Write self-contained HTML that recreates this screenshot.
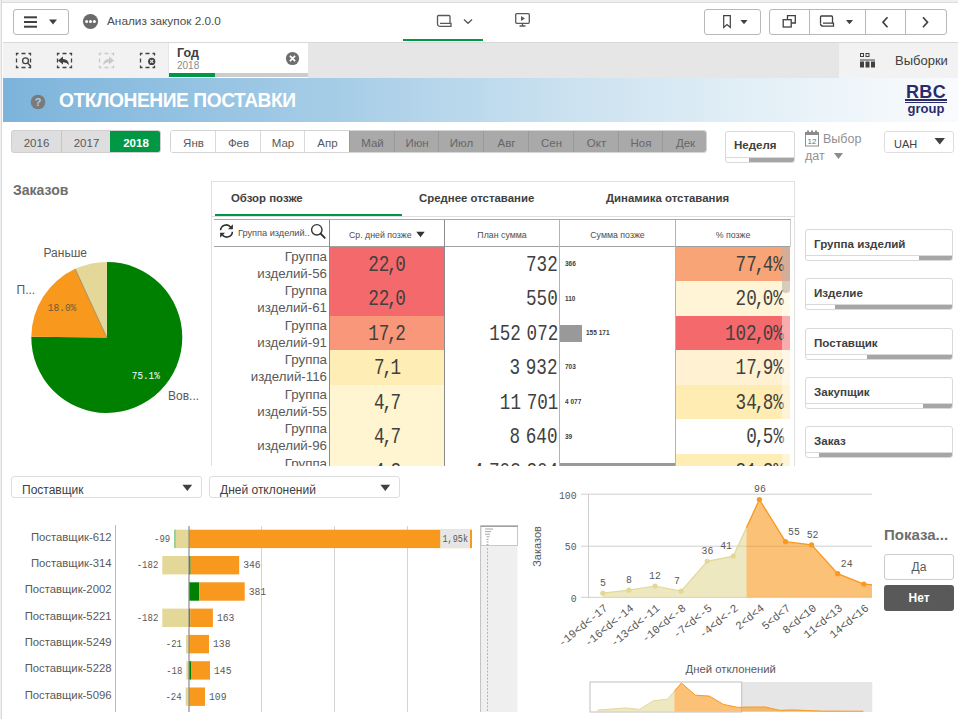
<!DOCTYPE html>
<html lang="ru">
<head>
<meta charset="utf-8">
<title>Анализ закупок 2.0.0</title>
<style>
*{box-sizing:border-box;margin:0;padding:0}
html,body{width:958px;height:719px;overflow:hidden;background:#fff}
body{position:relative;font-family:"Liberation Sans",sans-serif;color:#595959;font-size:12px}
.abs{position:absolute}
.t{position:absolute;white-space:nowrap;line-height:1}
.mono{font-family:"Liberation Mono",monospace}
/* frame */
#frameTop{left:0;top:0;width:958px;height:3px;background:#efefef;border-bottom:1px solid #dcdcdc}
#frameLeft{left:0;top:0;width:2px;height:719px;background:#efefef;border-right:1px solid #d9d9d9}
/* toolbar */
.btn{position:absolute;border:1px solid #b8b8b8;border-radius:3px;background:#fff}
.vdiv{position:absolute;top:0;width:1px;height:100%;background:#b8b8b8}
#tbLine{left:3px;top:42px;width:955px;height:1px;background:#d9d9d9}
/* selection bar */
#selbar{left:3px;top:43px;width:955px;height:35px;background:#e6e6e6}
#selLeft{left:0;top:0;width:165px;height:35px;background:#f2f2f2}
#selTab{left:166px;top:0;width:139px;height:35px;background:#fff}
#selRight{left:836px;top:0;width:119px;height:35px;background:#f2f2f2}
.yr{top:0;height:21px;line-height:24px;text-align:center}
.c1{left:2px;width:113px;text-align:right;font-size:13.300px;line-height:17.250px;color:#595959;white-space:nowrap;padding-top:1px}
.num{font-family:"Liberation Mono",monospace;font-size:21.500px;color:#404040;white-space:nowrap;overflow:hidden}
.sq{display:inline-block;transform:scaleX(0.82);word-spacing:-6px}
.cm{margin:0 -2.800px}
.tiny{font-size:6.500px;font-weight:bold;color:#404040;font-family:"Liberation Sans",sans-serif}
.lb{left:805px;width:148px;height:32px;border:1px solid #d9d9d9;border-radius:3px;background:#fff;overflow:hidden}
.dd{height:22px;border:1px solid #dedede;border-radius:3px;background:#fff}
/* banner */
#banner{left:3px;top:78px;width:955px;height:44px;background:linear-gradient(90deg,#7db4db 0%,#a6cde7 35%,#cce2f0 60%,#e4f0f7 80%,#f5f9fc 95%,#f9fbfd 100%)}
</style>
</head>
<body>
<div id="frameTop" class="abs"></div>

<!-- TOOLBAR -->
<div id="toolbar" class="abs" style="left:3px;top:3px;width:955px;height:39px;background:#fff">
  <!-- menu button -->
  <div class="btn" style="left:10px;top:6px;width:56px;height:26px">
    <svg class="abs" style="left:0;top:0" width="54" height="24" viewBox="0 0 54 24">
      <rect x="10" y="6.300" width="13" height="2" fill="#404040"/>
      <rect x="10" y="11" width="13" height="2" fill="#404040"/>
      <rect x="10" y="15.700" width="13" height="2" fill="#404040"/>
      <path d="M35 9.5 L43 9.5 L39 14.5 Z" fill="#404040"/>
    </svg>
  </div>
  <!-- app icon -->
  <svg class="abs" style="left:79px;top:10px" width="17" height="17" viewBox="0 0 17 17">
    <circle cx="8.5" cy="8.5" r="7.6" fill="#6a6a6a"/>
    <circle cx="4.6" cy="8.6" r="1.5" fill="#fff"/><circle cx="8.5" cy="8.6" r="1.5" fill="#fff"/><circle cx="12.4" cy="8.6" r="1.5" fill="#fff"/>
  </svg>
  <div class="t" style="left:104px;top:13px;font-size:11.800px;color:#4d4d4d">Анализ закупок 2.0.0</div>
  <!-- center sheet icon -->
  <svg class="abs" style="left:431px;top:11px" width="20" height="16" viewBox="0 0 20 16">
    <path d="M3.5 9.5 V2.5 Q3.5 1.5 4.5 1.5 H15 Q16 1.5 16 2.5 V9 M6 9.3 H17 V12.3 H6.3 Q3.5 12.3 3.5 9.5" fill="none" stroke="#595959" stroke-width="1.3"/>
  </svg>
  <svg class="abs" style="left:459px;top:14px" width="12" height="9" viewBox="0 0 12 9"><path d="M2 2.5 L6 6.3 L10 2.5" fill="none" stroke="#595959" stroke-width="1.4"/></svg>
  <div class="abs" style="left:400px;top:36px;width:80px;height:2px;background:#009845"></div>
  <!-- presentation icon -->
  <svg class="abs" style="left:511px;top:9px" width="18" height="16" viewBox="0 0 18 16">
    <rect x="1.7" y="1.7" width="13.6" height="9.6" rx="1" fill="none" stroke="#595959" stroke-width="1.3"/>
    <path d="M7 4 L11 6.5 L7 9 Z" fill="#595959"/>
    <path d="M8.5 11.5 V13.5 M5.5 14 H11.5" stroke="#595959" stroke-width="1.3" fill="none"/>
  </svg>
  <!-- bookmark button -->
  <div class="btn" style="left:701px;top:6px;width:57px;height:26px">
    <svg class="abs" style="left:0;top:0" width="55" height="24" viewBox="0 0 55 24">
      <path d="M18.7 5.7 H25.3 V17.5 L22 14.6 L18.7 17.5 Z" fill="none" stroke="#404040" stroke-width="1.2"/>
      <path d="M35.5 10 L42.5 10 L39 14.3 Z" fill="#404040"/>
    </svg>
  </div>
  <!-- right group -->
  <div class="btn" style="left:766px;top:6px;width:178px;height:26px">
    <div class="vdiv" style="left:39px"></div>
    <div class="vdiv" style="left:95px"></div>
    <div class="vdiv" style="left:135px"></div>
    <svg class="abs" style="left:-1px;top:0" width="177" height="24" viewBox="0 0 177 24">
      <!-- duplicate -->
      <path d="M18.5 9.5 V5.7 H26.3 V13 H22.5" fill="none" stroke="#404040" stroke-width="1.3"/>
      <rect x="14.2" y="9.7" width="8" height="7.3" fill="none" stroke="#404040" stroke-width="1.3"/>
      <!-- sheet -->
      <path d="M51.5 13.2 V7 Q51.5 6 52.5 6 H62.5 Q63.5 6 63.5 7 V13 M54 13.2 H64.5 V16.2 H54.3 Q51.5 16.2 51.5 13.4" fill="none" stroke="#404040" stroke-width="1.3"/>
      <path d="M77 10 L84 10 L80.5 14.3 Z" fill="#404040"/>
      <!-- prev / next -->
      <path d="M118.500 7.300 L114 12.200 L118.500 17.200" fill="none" stroke="#404040" stroke-width="1.700"/>
      <path d="M154 7.300 L158.500 12.200 L154 17.200" fill="none" stroke="#404040" stroke-width="1.700"/>
    </svg>
  </div>
</div>
<div id="tbLine" class="abs"></div>

<!-- SELECTION BAR -->
<div id="selbar" class="abs">
  <div id="selLeft" class="abs">
    <svg class="abs" style="left:0;top:0" width="165" height="35" viewBox="0 0 165 35">
      <g fill="none" stroke="#404040" stroke-width="1.3">
        <rect x="13.500" y="10.500" width="14" height="14" stroke-dasharray="4 3" stroke-dashoffset="2"/>
        <circle cx="22.500" cy="17.800" r="2.900" fill="#f2f2f2"/>
        <path d="M24.600 20 L27.800 23.300"/>
        <rect x="54.500" y="10.500" width="14" height="14" stroke-dasharray="4 3" stroke-dashoffset="2"/>
        <rect x="137.500" y="10.500" width="14" height="14" stroke-dasharray="4 3" stroke-dashoffset="2"/>
      </g>
      <rect x="56.500" y="14" width="9" height="8" fill="#f2f2f2"/>
      <path d="M55 17.500 L60 13.500 V16 Q65.500 16 66 22 Q63.500 19 60 19.200 V21.500 Z" fill="#404040"/>
      <g opacity="0.22">
        <rect x="96.500" y="10.500" width="14" height="14" fill="none" stroke="#404040" stroke-width="1.3" stroke-dasharray="4 3" stroke-dashoffset="2"/>
        <rect x="99.500" y="14" width="12" height="8" fill="#f2f2f2"/>
        <path d="M111 17.500 L106 13.500 V16 Q100.500 16 100 22 Q102.500 19 106 19.200 V21.500 Z" fill="#404040"/>
      </g>
      <circle cx="148.700" cy="18.400" r="4.600" fill="#f2f2f2"/>
      <circle cx="148.700" cy="18.400" r="3.600" fill="#404040"/>
      <path d="M147.200 16.900 L150.200 19.900 M150.200 16.900 L147.200 19.900" stroke="#f2f2f2" stroke-width="1.100"/>
    </svg>
  </div>
  <div id="selTab" class="abs">
    <div class="t" style="left:8px;top:4px;font-size:12.500px;font-weight:bold;color:#404040">Год</div>
    <div class="t" style="left:8px;top:18px;font-size:10px;color:#8c8c8c">2018</div>
    <svg class="abs" style="left:116px;top:8px" width="15" height="15" viewBox="0 0 15 15">
      <circle cx="7.500" cy="7.500" r="6.600" fill="#6e6e6e"/>
      <path d="M4.900 4.900 L10.100 10.100 M10.100 4.900 L4.900 10.100" stroke="#fff" stroke-width="1.700"/>
    </svg>
    <div class="abs" style="left:0;top:30px;width:139px;height:4px;background:#ccc"></div>
    <div class="abs" style="left:0;top:30px;width:46px;height:4px;background:#009845"></div>
  </div>
  <div id="selRight" class="abs">
    <svg class="abs" style="left:20px;top:9px" width="17" height="17" viewBox="0 0 17 17">
      <g fill="none" stroke="#404040" stroke-width="1"><rect x="1.500" y="1.500" width="3" height="3"/><rect x="7" y="1.500" width="3" height="3"/></g>
      <rect x="1" y="7.500" width="15" height="1" fill="#404040"/><g fill="#404040"><rect x="1" y="9.500" width="4" height="6"/><rect x="6.500" y="9.500" width="4" height="6"/><rect x="12" y="9.500" width="4" height="6"/></g>
    </svg>
    <div class="t" style="left:56px;top:11px;font-size:13px;color:#404040">Выборки</div>
  </div>
</div>

<!-- BANNER -->
<div id="banner" class="abs">
  <svg class="abs" style="left:27px;top:16px" width="16" height="16" viewBox="0 0 16 16">
    <circle cx="8" cy="8" r="7.300" fill="#7a7a7a"/>
    <text x="8" y="12" text-anchor="middle" font-family="Liberation Sans, sans-serif" font-weight="bold" font-size="11" fill="#a9cfea">?</text>
  </svg>
  <div class="t" id="title" style="left:56px;top:11px;font-size:21px;font-weight:bold;color:#fff;letter-spacing:-0.5px;transform-origin:0 0;transform:scaleX(0.915)">ОТКЛОНЕНИЕ ПОСТАВКИ</div>
  <div class="abs" style="left:902px;top:5px;width:42px;height:34px;color:#2b2b6b;font-weight:bold;text-align:center">
    <div class="t" style="left:0;top:0;width:42px;font-size:18px;letter-spacing:0.3px">RBC</div>
    <div class="abs" style="left:0;top:16px;width:42px;height:1.500px;background:#2b2b6b"></div>
    <div class="abs" style="left:0;top:19px;width:42px;height:1px;background:#2b2b6b"></div>
    <div class="t" style="left:0;top:19px;width:42px;font-size:13px">group</div>
  </div>
</div>

<!-- FILTERS -->
<div id="filters">
<div class="abs" style="left:11px;top:130px;width:150px;height:23px;border-radius:3px;overflow:hidden;border:1px solid #cfcfcf;background:#dedede;font-size:11.500px">
<div class="abs yr" style="left:0;width:49px">2016</div><div class="abs yr" style="left:49px;width:50px;border-left:1px solid #c6c6c6">2017</div><div class="abs yr" style="left:98px;top:-1px;height:23px;width:52px;background:#009845;color:#fff;font-weight:bold;line-height:26px">2018</div></div>
<div class="abs" style="left:170px;top:130px;width:537px;height:23px;border-radius:3px;overflow:hidden;border:1px solid #d4d4d4;background:#fff;font-size:11.500px">
<div class="abs yr" style="left:0px;width:45px;background:#fff;color:#595959;">Янв</div>
<div class="abs yr" style="left:44px;width:46px;background:#fff;color:#595959;border-left:1px solid #d9d9d9;">Фев</div>
<div class="abs yr" style="left:89px;width:45px;background:#fff;color:#595959;border-left:1px solid #d9d9d9;">Мар</div>
<div class="abs yr" style="left:133px;width:46px;background:#fff;color:#595959;border-left:1px solid #d9d9d9;">Апр</div>
<div class="abs yr" style="left:178px;width:46px;background:#a9a9a9;color:#666;border-left:1px solid #999;">Май</div>
<div class="abs yr" style="left:223px;width:45px;background:#a9a9a9;color:#666;border-left:1px solid #999;">Июн</div>
<div class="abs yr" style="left:267px;width:46px;background:#a9a9a9;color:#666;border-left:1px solid #999;">Июл</div>
<div class="abs yr" style="left:312px;width:46px;background:#a9a9a9;color:#666;border-left:1px solid #999;">Авг</div>
<div class="abs yr" style="left:357px;width:46px;background:#a9a9a9;color:#666;border-left:1px solid #999;">Сен</div>
<div class="abs yr" style="left:402px;width:46px;background:#a9a9a9;color:#666;border-left:1px solid #999;">Окт</div>
<div class="abs yr" style="left:447px;width:45px;background:#a9a9a9;color:#666;border-left:1px solid #999;">Ноя</div>
<div class="abs yr" style="left:491px;width:46px;background:#a9a9a9;color:#666;border-left:1px solid #999;">Дек</div>
</div>
<div class="abs" style="left:725px;top:131px;width:70px;height:32px;border:1px solid #d9d9d9;border-radius:3px;background:#fff;overflow:hidden">
  <div class="t" style="left:8px;top:8px;font-size:11.500px;font-weight:bold;color:#404040">Неделя</div>
  <div class="abs" style="left:0;top:25px;width:68px;height:1px;background:#d9d9d9"></div>
  <div class="abs" style="left:23px;top:26px;width:46px;height:4px;background:#a6a6a6"></div>
</div>
<svg class="abs" style="left:804px;top:130px" width="17" height="18" viewBox="0 0 17 18">
  <rect x="1.500" y="3.500" width="13" height="12.500" fill="#fff" stroke="#8c8c8c" stroke-width="1"/>
  <rect x="1" y="2" width="14" height="3" fill="#8c8c8c"/>
  <rect x="3" y="0.500" width="2" height="3" fill="#8c8c8c"/><rect x="7" y="0.500" width="2" height="3" fill="#8c8c8c"/><rect x="11" y="0.500" width="2" height="3" fill="#8c8c8c"/>
  <text x="8" y="13.500" text-anchor="middle" font-family="Liberation Sans, sans-serif" font-size="8" fill="#6e6e6e">12</text>
</svg>
<div class="t" style="left:823px;top:133px;font-size:12.500px;color:#919191">Выбор</div>
<div class="t" style="left:805px;top:150px;font-size:12.500px;color:#919191">дат</div>
<svg class="abs" style="left:833px;top:152px" width="11" height="8" viewBox="0 0 11 8"><path d="M1 1 H10 L5.500 7 Z" fill="#8c8c8c"/></svg>
<div class="abs" style="left:884px;top:131px;width:70px;height:22px;border:1px solid #dedede;border-radius:3px;background:#fff">
  <div class="t" style="left:9px;top:7px;font-size:11px;color:#404040">UAH</div>
  <svg class="abs" style="left:49px;top:5px" width="12" height="9" viewBox="0 0 12 9"><path d="M0.500 1 H11 L5.750 7.500 Z" fill="#404040"/></svg>
</div>
</div>

<!-- PIE -->
<div id="pie">
<div class="t" style="left:13px;top:183px;font-size:14px;font-weight:bold;color:#6e6e6e">Заказов</div>
<svg class="abs" style="left:0;top:230px" width="211" height="200" viewBox="0 230 211 200">
<path d="M106.80 337.40 L106.80 261.90 A75.50 75.50 0 1 1 31.30 336.87 Z" fill="#008000"/>
<path d="M106.80 337.40 L31.30 336.87 A75.50 75.50 0 0 1 75.13 268.86 Z" fill="#f8981d"/>
<path d="M106.80 337.40 L75.13 268.86 A75.50 75.50 0 0 1 106.80 261.90 Z" fill="#e3d898"/>
<path d="M106.80 337.40 L75.13 268.86" stroke="#8a7a55" stroke-width="0.7"/>
<text x="43.500" y="257" font-size="12" fill="#595959" font-family="Liberation Sans, sans-serif">Раньше</text>
<text x="16.500" y="294" font-size="12" fill="#595959" font-family="Liberation Sans, sans-serif">П...</text>
<text x="168" y="400" font-size="12" fill="#595959" font-family="Liberation Sans, sans-serif">Вов...</text>
<text x="47.800" y="310.700" font-size="10.500" textLength="28.500" lengthAdjust="spacingAndGlyphs" fill="#6b5a3a" font-family="Liberation Mono, monospace">18.0%</text>
<text x="131.800" y="378.800" font-size="10.500" textLength="28" lengthAdjust="spacingAndGlyphs" fill="#fff" font-family="Liberation Mono, monospace">75.1%</text>
</svg>
</div>

<!-- TABLE -->
<div id="table">
<div class="abs" style="left:211px;top:181px;width:584px;height:285px;border:1px solid #e0e0e0;border-bottom:none;background:#fff;overflow:hidden">
<div class="t" style="left:19px;top:11px;font-size:11.400px;font-weight:bold;color:#404040">Обзор позже</div>
<div class="t" style="left:207px;top:11px;font-size:11.400px;font-weight:bold;color:#404040">Среднее отставание</div>
<div class="t" style="left:394px;top:11px;font-size:11.400px;font-weight:bold;color:#404040">Динамика отставания</div>
<div class="abs" style="left:3px;top:32px;width:187px;height:2px;background:#009845"></div>
<div class="abs" style="left:0;top:34px;width:584px;height:1px;background:#e0e0e0"></div>
<div class="abs" style="left:2px;top:37px;width:577px;height:1px;background:#a8a8a8"></div>
<div class="abs" style="left:2px;top:64px;width:577px;height:1px;background:#a0a0a0"></div>
<div class="abs c1" style="top:65px;height:34px">Группа<br>изделий-56</div>
<div class="abs num" style="left:118px;top:65px;width:115px;height:34px;background:#f4696b;text-align:center;line-height:36px"><span class="sq" style="transform-origin:50% 50%">22<span class="cm">,</span>0</span></div>
<div class="abs num" style="left:233px;top:65px;width:114px;height:34px;text-align:right;line-height:36px;padding-right:1px"><span class="sq" style="transform-origin:100% 50%">732</span></div>
<div class="abs num" style="left:464px;top:65px;width:114px;height:34px;background:#f8a477;text-align:right;line-height:36px;padding-right:6px"><span class="sq" style="transform-origin:100% 50%">77<span class="cm">,</span>4%</span></div>
<div class="t tiny" style="left:353px;top:79px">366</div>
<div class="abs c1" style="top:99px;height:35px">Группа<br>изделий-61</div>
<div class="abs num" style="left:118px;top:99px;width:115px;height:35px;background:#f4696b;text-align:center;line-height:37px"><span class="sq" style="transform-origin:50% 50%">22<span class="cm">,</span>0</span></div>
<div class="abs num" style="left:233px;top:99px;width:114px;height:35px;text-align:right;line-height:37px;padding-right:1px"><span class="sq" style="transform-origin:100% 50%">550</span></div>
<div class="abs num" style="left:464px;top:99px;width:114px;height:35px;background:#fff5d6;text-align:right;line-height:37px;padding-right:6px"><span class="sq" style="transform-origin:100% 50%">20<span class="cm">,</span>0%</span></div>
<div class="t tiny" style="left:353px;top:114px">110</div>
<div class="abs c1" style="top:134px;height:34px">Группа<br>изделий-91</div>
<div class="abs num" style="left:118px;top:134px;width:115px;height:34px;background:#f8977a;text-align:center;line-height:36px"><span class="sq" style="transform-origin:50% 50%">17<span class="cm">,</span>2</span></div>
<div class="abs num" style="left:233px;top:134px;width:114px;height:34px;text-align:right;line-height:36px;padding-right:1px"><span class="sq" style="transform-origin:100% 50%">152 072</span></div>
<div class="abs num" style="left:464px;top:134px;width:114px;height:34px;background:#f4696b;text-align:right;line-height:36px;padding-right:6px"><span class="sq" style="transform-origin:100% 50%">102<span class="cm">,</span>0%</span></div>
<div class="abs" style="left:348px;top:143px;width:22px;height:17px;background:#999"></div>
<div class="t tiny" style="left:374px;top:148px">155 171</div>
<div class="abs c1" style="top:168px;height:35px">Группа<br>изделий-116</div>
<div class="abs num" style="left:118px;top:168px;width:115px;height:35px;background:#feedb5;text-align:center;line-height:37px"><span class="sq" style="transform-origin:50% 50%">7<span class="cm">,</span>1</span></div>
<div class="abs num" style="left:233px;top:168px;width:114px;height:35px;text-align:right;line-height:37px;padding-right:1px"><span class="sq" style="transform-origin:100% 50%">3 932</span></div>
<div class="abs num" style="left:464px;top:168px;width:114px;height:35px;background:#fff1d2;text-align:right;line-height:37px;padding-right:6px"><span class="sq" style="transform-origin:100% 50%">17<span class="cm">,</span>9%</span></div>
<div class="t tiny" style="left:353px;top:182px">703</div>
<div class="abs c1" style="top:203px;height:34px">Группа<br>изделий-55</div>
<div class="abs num" style="left:118px;top:203px;width:115px;height:34px;background:#fff5d0;text-align:center;line-height:36px"><span class="sq" style="transform-origin:50% 50%">4<span class="cm">,</span>7</span></div>
<div class="abs num" style="left:233px;top:203px;width:114px;height:34px;text-align:right;line-height:36px;padding-right:1px"><span class="sq" style="transform-origin:100% 50%">11 701</span></div>
<div class="abs num" style="left:464px;top:203px;width:114px;height:34px;background:#feecb2;text-align:right;line-height:36px;padding-right:6px"><span class="sq" style="transform-origin:100% 50%">34<span class="cm">,</span>8%</span></div>
<div class="t tiny" style="left:353px;top:217px">4 077</div>
<div class="abs c1" style="top:237px;height:35px">Группа<br>изделий-96</div>
<div class="abs num" style="left:118px;top:237px;width:115px;height:35px;background:#fff5d0;text-align:center;line-height:37px"><span class="sq" style="transform-origin:50% 50%">4<span class="cm">,</span>7</span></div>
<div class="abs num" style="left:233px;top:237px;width:114px;height:35px;text-align:right;line-height:37px;padding-right:1px"><span class="sq" style="transform-origin:100% 50%">8 640</span></div>
<div class="abs num" style="left:464px;top:237px;width:114px;height:35px;background:#ffffff;text-align:right;line-height:37px;padding-right:6px"><span class="sq" style="transform-origin:100% 50%">0<span class="cm">,</span>5%</span></div>
<div class="t tiny" style="left:353px;top:252px">39</div>
<div class="abs c1" style="top:272px;height:34px">Группа<br>изделий-12</div>
<div class="abs num" style="left:118px;top:272px;width:115px;height:34px;background:#fff5d0;text-align:center;line-height:36px"><span class="sq" style="transform-origin:50% 50%">4<span class="cm">,</span>2</span></div>
<div class="abs num" style="left:233px;top:272px;width:114px;height:34px;text-align:right;line-height:36px;padding-right:1px"><span class="sq" style="transform-origin:100% 50%">4 708 204</span></div>
<div class="abs num" style="left:464px;top:272px;width:114px;height:34px;background:#feedb5;text-align:right;line-height:36px;padding-right:6px"><span class="sq" style="transform-origin:100% 50%">31<span class="cm">,</span>2%</span></div>
<div class="abs" style="left:348px;top:281px;width:115px;height:17px;background:#999"></div>
<div class="abs" style="left:117px;top:38px;width:1px;height:247px;background:#8c8c8c"></div>
<div class="abs" style="left:232px;top:38px;width:1px;height:247px;background:#8c8c8c"></div>
<div class="abs" style="left:347px;top:38px;width:1px;height:247px;background:#b4b4b4"></div>
<div class="abs" style="left:463px;top:38px;width:1px;height:247px;background:#b4b4b4"></div>
<div class="abs" style="left:578px;top:38px;width:1px;height:27px;background:#d0d0d0"></div>
<svg class="abs" style="left:6px;top:41px" width="17" height="16" viewBox="0 0 17 16">
  <path d="M2.600 7.300 A5.600 5.600 0 0 1 12.700 4.200" fill="none" stroke="#333" stroke-width="1.600"/>
  <path d="M14.400 8.700 A5.600 5.600 0 0 1 4.300 11.800" fill="none" stroke="#333" stroke-width="1.600"/>
  <path d="M14.900 1.300 V6.200 H10 Z" fill="#333"/>
  <path d="M2.100 14.700 V9.800 H7 Z" fill="#333"/>
</svg>
<div class="t" style="left:26px;top:47px;font-size:9.200px;color:#4d4d4d">Группа изделий..</div>
<svg class="abs" style="left:98px;top:41px" width="17" height="17" viewBox="0 0 17 17">
  <circle cx="6.800" cy="6.800" r="5.200" fill="#fff" stroke="#333" stroke-width="1.400"/><path d="M10.500 10.500 L15.300 15.300" stroke="#333" stroke-width="1.800"/>
</svg>
<div class="t" style="left:118px;top:49px;width:114px;text-align:center;font-size:8.800px;color:#4d4d4d">Ср. дней позже <svg width="9" height="7" viewBox="0 0 9 7" style="margin-left:2px"><path d="M0.300 0.800 H8.700 L4.500 6.300 Z" fill="#333"/></svg></div>
<div class="t" style="left:233px;top:49px;width:114px;text-align:center;font-size:8.800px;color:#4d4d4d">План сумма</div>
<div class="t" style="left:348px;top:49px;width:115px;text-align:center;font-size:8.800px;color:#4d4d4d">Сумма позже</div>
<div class="t" style="left:464px;top:49px;width:114px;text-align:center;font-size:8.800px;color:#4d4d4d">% позже</div>
<div class="abs" style="left:570px;top:65px;width:8px;height:220px;background:rgba(255,255,255,0.45)"></div>
<div class="abs" style="left:570px;top:65px;width:8px;height:46px;background:rgba(120,100,90,0.30);border-radius:0 0 4px 4px"></div>
</div>
</div>

<!-- SIDEBAR -->
<div id="side">
<div class="abs lb" style="top:229px"><div class="t" style="left:8px;top:8px;font-size:11.600px;font-weight:bold;color:#404040">Группа изделий</div><div class="abs" style="left:0;top:25px;width:146px;height:1px;background:#d9d9d9"></div><div class="abs" style="left:113px;top:26px;width:33px;height:4px;background:#a6a6a6"></div></div>
<div class="abs lb" style="top:278px"><div class="t" style="left:8px;top:8px;font-size:11.600px;font-weight:bold;color:#404040">Изделие</div><div class="abs" style="left:0;top:25px;width:146px;height:1px;background:#d9d9d9"></div><div class="abs" style="left:29px;top:26px;width:117px;height:4px;background:#a6a6a6"></div></div>
<div class="abs lb" style="top:328px"><div class="t" style="left:8px;top:8px;font-size:11.600px;font-weight:bold;color:#404040">Поставщик</div><div class="abs" style="left:0;top:25px;width:146px;height:1px;background:#d9d9d9"></div><div class="abs" style="left:61px;top:26px;width:85px;height:4px;background:#a6a6a6"></div></div>
<div class="abs lb" style="top:377px"><div class="t" style="left:8px;top:8px;font-size:11.600px;font-weight:bold;color:#404040">Закупщик</div><div class="abs" style="left:0;top:25px;width:146px;height:1px;background:#d9d9d9"></div><div class="abs" style="left:117px;top:26px;width:29px;height:4px;background:#a6a6a6"></div></div>
<div class="abs lb" style="top:426px"><div class="t" style="left:8px;top:8px;font-size:11.600px;font-weight:bold;color:#404040">Заказ</div><div class="abs" style="left:0;top:25px;width:146px;height:1px;background:#d9d9d9"></div><div class="abs" style="left:13px;top:26px;width:133px;height:4px;background:#a6a6a6"></div></div>
</div>

<!-- BARCHART -->
<div id="bars">
<div class="abs dd" style="left:11px;top:476px;width:191px"><div class="t" style="left:10px;top:7px;font-size:12px;color:#404040">Поставщик</div><svg class="abs" style="left:170px;top:7px" width="11" height="8" viewBox="0 0 11 8"><path d="M0.400 0.800 H10.200 L5.300 7 Z" fill="#404040"/></svg></div>
<div class="abs dd" style="left:209px;top:476px;width:191px"><div class="t" style="left:10px;top:7px;font-size:12px;color:#404040">Дней отклонений</div><svg class="abs" style="left:170px;top:7px" width="11" height="8" viewBox="0 0 11 8"><path d="M0.400 0.800 H10.200 L5.300 7 Z" fill="#404040"/></svg></div>
<svg class="abs" style="left:0;top:520px" width="530" height="199" viewBox="0 520 530 199" font-family="Liberation Sans, sans-serif">
<rect x="261" y="526" width="1" height="186" fill="#d4d4d4"/>
<rect x="334" y="526" width="1" height="186" fill="#d4d4d4"/>
<rect x="407" y="526" width="1" height="186" fill="#d4d4d4"/>
<rect x="115" y="525" width="1" height="187" fill="#bdbdbd"/>
<rect x="174.2" y="529.7" width="1.6" height="18.4" fill="#7cc47c"/>
<rect x="175.8" y="529.7" width="13.2" height="18.4" fill="#e3d898"/>
<rect x="189.0" y="529.7" width="281.0" height="18.4" fill="#f8981d"/>
<text x="111.500" y="540.7" text-anchor="end" font-size="11.300" fill="#595959">Поставщик-612</text>
<text x="170.2" y="542.0" text-anchor="end" font-size="10.500" fill="#595959" font-family="Liberation Mono, monospace" textLength="16.2" lengthAdjust="spacingAndGlyphs">-99</text>
<rect x="162.3" y="556.0" width="26.7" height="18.4" fill="#e3d898"/>
<rect x="189.0" y="556.0" width="1.6" height="18.4" fill="#008000"/>
<rect x="190.6" y="556.0" width="48.6" height="18.4" fill="#f8981d"/>
<text x="111.500" y="567.0" text-anchor="end" font-size="11.300" fill="#595959">Поставщик-314</text>
<text x="158.3" y="568.3" text-anchor="end" font-size="10.500" fill="#595959" font-family="Liberation Mono, monospace" textLength="21.6" lengthAdjust="spacingAndGlyphs">-182</text>
<text x="243.2" y="568.3" font-size="10.500" fill="#595959" font-family="Liberation Mono, monospace" textLength="17.500" lengthAdjust="spacingAndGlyphs">346</text>
<rect x="189.0" y="582.3" width="10.1" height="18.4" fill="#008000"/>
<rect x="199.1" y="582.3" width="45.6" height="18.4" fill="#f8981d"/>
<text x="111.500" y="593.3" text-anchor="end" font-size="11.300" fill="#595959">Поставщик-2002</text>
<text x="248.7" y="594.6" font-size="10.500" fill="#595959" font-family="Liberation Mono, monospace" textLength="17.500" lengthAdjust="spacingAndGlyphs">381</text>
<rect x="162.3" y="608.6" width="26.7" height="18.4" fill="#e3d898"/>
<rect x="189.0" y="608.6" width="1.3" height="18.4" fill="#008000"/>
<rect x="190.3" y="608.6" width="22.6" height="18.4" fill="#f8981d"/>
<text x="111.500" y="619.6" text-anchor="end" font-size="11.300" fill="#595959">Поставщик-5221</text>
<text x="158.3" y="620.9" text-anchor="end" font-size="10.500" fill="#595959" font-family="Liberation Mono, monospace" textLength="21.6" lengthAdjust="spacingAndGlyphs">-182</text>
<text x="216.9" y="620.9" font-size="10.500" fill="#595959" font-family="Liberation Mono, monospace" textLength="17.500" lengthAdjust="spacingAndGlyphs">163</text>
<rect x="186.0" y="634.9" width="3.0" height="18.4" fill="#e3d898"/>
<rect x="189.0" y="634.9" width="20.0" height="18.4" fill="#f8981d"/>
<text x="111.500" y="645.9" text-anchor="end" font-size="11.300" fill="#595959">Поставщик-5249</text>
<text x="182.0" y="647.2" text-anchor="end" font-size="10.500" fill="#595959" font-family="Liberation Mono, monospace" textLength="16.2" lengthAdjust="spacingAndGlyphs">-21</text>
<text x="213.0" y="647.2" font-size="10.500" fill="#595959" font-family="Liberation Mono, monospace" textLength="17.500" lengthAdjust="spacingAndGlyphs">138</text>
<rect x="186.4" y="661.2" width="2.6" height="18.4" fill="#e3d898"/>
<rect x="189.0" y="661.2" width="2.0" height="18.4" fill="#008000"/>
<rect x="191.0" y="661.2" width="19.0" height="18.4" fill="#f8981d"/>
<text x="111.500" y="672.2" text-anchor="end" font-size="11.300" fill="#595959">Поставщик-5228</text>
<text x="182.4" y="673.5" text-anchor="end" font-size="10.500" fill="#595959" font-family="Liberation Mono, monospace" textLength="16.2" lengthAdjust="spacingAndGlyphs">-18</text>
<text x="214.0" y="673.5" font-size="10.500" fill="#595959" font-family="Liberation Mono, monospace" textLength="17.500" lengthAdjust="spacingAndGlyphs">145</text>
<rect x="185.6" y="687.5" width="3.4" height="18.4" fill="#e3d898"/>
<rect x="189.0" y="687.5" width="16.0" height="18.4" fill="#f8981d"/>
<text x="111.500" y="698.5" text-anchor="end" font-size="11.300" fill="#595959">Поставщик-5096</text>
<text x="181.6" y="699.8" text-anchor="end" font-size="10.500" fill="#595959" font-family="Liberation Mono, monospace" textLength="16.2" lengthAdjust="spacingAndGlyphs">-24</text>
<text x="209.0" y="699.8" font-size="10.500" fill="#595959" font-family="Liberation Mono, monospace" textLength="17.500" lengthAdjust="spacingAndGlyphs">109</text>
<rect x="470" y="529.700" width="2" height="18.400" fill="#f8981d"/>
<rect x="440.200" y="529.700" width="29.800" height="18.400" fill="#e6e6e6"/>
<text x="442.500" y="542" font-size="10.500" fill="#595959" font-family="Liberation Mono, monospace" textLength="25.500" lengthAdjust="spacingAndGlyphs">1,95k</text>
<rect x="188.400" y="526" width="1.200" height="186" fill="#8c8c8c"/>
<rect x="480.500" y="526" width="37" height="186" fill="#efefef"/>
<rect x="480" y="526" width="1" height="186" fill="#c4c4c4"/>
<rect x="481" y="526" width="36.500" height="19.500" fill="#fff" stroke="#c8c8c8" stroke-width="1"/>
<rect x="480.500" y="525.500" width="37.500" height="1.500" fill="#a0a0a0"/>
<rect x="485.0" y="528.5" width="8" height="1" fill="#a6a6a6"/>
<rect x="485.0" y="531.1" width="6" height="1" fill="#a6a6a6"/>
<rect x="485.0" y="533.7" width="5" height="1" fill="#a6a6a6"/>
<rect x="486.5" y="536.3" width="3" height="1" fill="#a6a6a6"/>
<rect x="486.5" y="538.9" width="2" height="1" fill="#a6a6a6"/>
<rect x="486.5" y="541.5" width="2" height="1" fill="#a6a6a6"/>
<rect x="486.5" y="544.1" width="2" height="1" fill="#a6a6a6"/>
<path d="M487.500 548 V712" stroke="#b5b5b5" stroke-width="1" stroke-dasharray="2 1.500"/>
</svg>
</div>

<!-- AREA -->
<div id="area">
<svg class="abs" style="left:520px;top:470px" width="438" height="249" viewBox="520 470 438 249" font-family="Liberation Sans, sans-serif">
<rect x="581" y="596.8" width="291" height="1" fill="#cfcfcf"/>
<text x="576.600" y="601.6" text-anchor="end" font-size="10.500" fill="#595959" font-family="Liberation Mono, monospace" textLength="5.9" lengthAdjust="spacingAndGlyphs">0</text>
<rect x="581" y="545.7" width="291" height="1" fill="#cfcfcf"/>
<text x="576.600" y="550.0" text-anchor="end" font-size="10.500" fill="#595959" font-family="Liberation Mono, monospace" textLength="11.8" lengthAdjust="spacingAndGlyphs">50</text>
<rect x="581" y="493.7" width="291" height="1" fill="#cfcfcf"/>
<text x="576.600" y="498.5" text-anchor="end" font-size="10.500" fill="#595959" font-family="Liberation Mono, monospace" textLength="17.7" lengthAdjust="spacingAndGlyphs">100</text>
<rect x="588" y="494" width="1" height="104" fill="#cfcfcf"/>
<text transform="translate(540.800,546.500) rotate(-90)" text-anchor="middle" font-size="11" fill="#595959">Заказов</text>
<polygon points="602.8,593.2 628.9,590.2 655.0,586.0 681.1,591.2 707.2,561.3 733.3,556.1 746.4,527.7 746.4,597.3 602.8,597.3" fill="#e3d898" fill-opacity="0.6"/>
<polygon points="746.4,527.7 759.4,499.5 785.5,541.7 811.6,544.8 837.7,573.7 863.8,584.0 872.0,584.8 872.0,597.3 746.4,597.3" fill="#f8981d" fill-opacity="0.6"/>
<polyline points="602.8,593.2 628.9,590.2 655.0,586.0 681.1,591.2 707.2,561.3 733.3,556.1 746.4,527.7" fill="none" stroke="#e3d898" stroke-width="1.200"/>
<polyline points="746.4,527.7 759.4,499.5 785.5,541.7 811.6,544.8 837.7,573.7 863.8,584.0 872.0,584.8" fill="none" stroke="#f8981d" stroke-width="1.300"/>
<circle cx="602.8" cy="593.2" r="2.600" fill="#e3d898"/>
<circle cx="628.9" cy="590.2" r="2.600" fill="#e3d898"/>
<circle cx="655.0" cy="586.0" r="2.600" fill="#e3d898"/>
<circle cx="681.1" cy="591.2" r="2.600" fill="#e3d898"/>
<circle cx="707.2" cy="561.3" r="2.600" fill="#e3d898"/>
<circle cx="733.3" cy="556.1" r="2.600" fill="#e3d898"/>
<circle cx="759.4" cy="499.5" r="2.600" fill="#f8981d"/>
<circle cx="785.5" cy="541.7" r="2.600" fill="#f8981d"/>
<circle cx="811.6" cy="544.8" r="2.600" fill="#f8981d"/>
<circle cx="837.7" cy="573.7" r="2.600" fill="#f8981d"/>
<circle cx="863.8" cy="584.0" r="2.600" fill="#f8981d"/>
<text x="602.9" y="585.7" text-anchor="middle" font-size="10.800" fill="#595959" font-family="Liberation Mono, monospace" textLength="5.9" lengthAdjust="spacingAndGlyphs">5</text>
<text x="628.9" y="583.4" text-anchor="middle" font-size="10.800" fill="#595959" font-family="Liberation Mono, monospace" textLength="5.9" lengthAdjust="spacingAndGlyphs">8</text>
<text x="655.0" y="578.9" text-anchor="middle" font-size="10.800" fill="#595959" font-family="Liberation Mono, monospace" textLength="11.8" lengthAdjust="spacingAndGlyphs">12</text>
<text x="676.9" y="584.1" text-anchor="middle" font-size="10.800" fill="#595959" font-family="Liberation Mono, monospace" textLength="5.9" lengthAdjust="spacingAndGlyphs">7</text>
<text x="707.4" y="554.0" text-anchor="middle" font-size="10.800" fill="#595959" font-family="Liberation Mono, monospace" textLength="11.8" lengthAdjust="spacingAndGlyphs">36</text>
<text x="726.1" y="549.1" text-anchor="middle" font-size="10.800" fill="#595959" font-family="Liberation Mono, monospace" textLength="11.8" lengthAdjust="spacingAndGlyphs">41</text>
<text x="760.0" y="491.9" text-anchor="middle" font-size="10.800" fill="#595959" font-family="Liberation Mono, monospace" textLength="11.8" lengthAdjust="spacingAndGlyphs">96</text>
<text x="794.0" y="534.8" text-anchor="middle" font-size="10.800" fill="#595959" font-family="Liberation Mono, monospace" textLength="11.8" lengthAdjust="spacingAndGlyphs">55</text>
<text x="812.6" y="537.9" text-anchor="middle" font-size="10.800" fill="#595959" font-family="Liberation Mono, monospace" textLength="11.8" lengthAdjust="spacingAndGlyphs">52</text>
<text x="846.7" y="566.9" text-anchor="middle" font-size="10.800" fill="#595959" font-family="Liberation Mono, monospace" textLength="11.8" lengthAdjust="spacingAndGlyphs">24</text>
<text transform="translate(608.3,609.200) rotate(-39.500)" text-anchor="end" font-size="11.300" fill="#595959" font-family="Liberation Mono, monospace" textLength="59.9" lengthAdjust="spacingAndGlyphs">-19&lt;d&lt;-17</text>
<text transform="translate(634.4,609.200) rotate(-39.500)" text-anchor="end" font-size="11.300" fill="#595959" font-family="Liberation Mono, monospace" textLength="59.9" lengthAdjust="spacingAndGlyphs">-16&lt;d&lt;-14</text>
<text transform="translate(660.5,609.200) rotate(-39.500)" text-anchor="end" font-size="11.300" fill="#595959" font-family="Liberation Mono, monospace" textLength="59.9" lengthAdjust="spacingAndGlyphs">-13&lt;d&lt;-11</text>
<text transform="translate(686.6,609.200) rotate(-39.500)" text-anchor="end" font-size="11.300" fill="#595959" font-family="Liberation Mono, monospace" textLength="53.2" lengthAdjust="spacingAndGlyphs">-10&lt;d&lt;-8</text>
<text transform="translate(712.7,609.200) rotate(-39.500)" text-anchor="end" font-size="11.300" fill="#595959" font-family="Liberation Mono, monospace" textLength="46.6" lengthAdjust="spacingAndGlyphs">-7&lt;d&lt;-5</text>
<text transform="translate(738.8,609.200) rotate(-39.500)" text-anchor="end" font-size="11.300" fill="#595959" font-family="Liberation Mono, monospace" textLength="46.6" lengthAdjust="spacingAndGlyphs">-4&lt;d&lt;-2</text>
<text transform="translate(764.9,609.200) rotate(-39.500)" text-anchor="end" font-size="11.300" fill="#595959" font-family="Liberation Mono, monospace" textLength="33.2" lengthAdjust="spacingAndGlyphs">2&lt;d&lt;4</text>
<text transform="translate(791.0,609.200) rotate(-39.500)" text-anchor="end" font-size="11.300" fill="#595959" font-family="Liberation Mono, monospace" textLength="33.2" lengthAdjust="spacingAndGlyphs">5&lt;d&lt;7</text>
<text transform="translate(817.1,609.200) rotate(-39.500)" text-anchor="end" font-size="11.300" fill="#595959" font-family="Liberation Mono, monospace" textLength="39.9" lengthAdjust="spacingAndGlyphs">8&lt;d&lt;10</text>
<text transform="translate(843.2,609.200) rotate(-39.500)" text-anchor="end" font-size="11.300" fill="#595959" font-family="Liberation Mono, monospace" textLength="46.6" lengthAdjust="spacingAndGlyphs">11&lt;d&lt;13</text>
<text transform="translate(869.3,609.200) rotate(-39.500)" text-anchor="end" font-size="11.300" fill="#595959" font-family="Liberation Mono, monospace" textLength="46.6" lengthAdjust="spacingAndGlyphs">14&lt;d&lt;16</text>
<text x="730.700" y="672.500" text-anchor="middle" font-size="11.300" fill="#595959">Дней отклонений</text>
<rect x="741.700" y="682" width="130.600" height="30" fill="#e6e6e6"/>
<rect x="590" y="682" width="151.700" height="30" fill="#fff" stroke="#bfbfbf" stroke-width="1"/>
<polygon points="597.4,710.0 611.4,709.1 625.4,707.9 639.4,709.4 653.4,700.8 667.4,699.3 674.3,691.3 674.3,711.5 597.4,711.5" fill="#e3d898" fill-opacity="0.6"/>
<polygon points="674.3,691.3 681.4,683.0 695.4,695.2 709.4,696.1 723.4,704.4 737.4,707.3 751.4,707.0 765.4,707.0 779.4,710.3 793.4,709.9 807.4,710.6 821.4,711.1 835.4,711.1 849.4,711.2 863.4,711.2 863.4,711.5 674.3,711.5" fill="#f8981d" fill-opacity="0.6"/>
<polyline points="597.4,710.0 611.4,709.1 625.4,707.9 639.4,709.4 653.4,700.8 667.4,699.3 674.3,691.3" fill="none" stroke="#e3d898" stroke-width="1"/>
<polyline points="674.3,691.3 681.4,683.0 695.4,695.2 709.4,696.1 723.4,704.4 737.4,707.3 751.4,707.0 765.4,707.0 779.4,710.3 793.4,709.9 807.4,710.6 821.4,711.1 835.4,711.1 849.4,711.2 863.4,711.2" fill="none" stroke="#f8981d" stroke-width="1"/>
</svg>
<div class="t" style="left:884px;top:527px;font-size:15px;font-weight:bold;color:#6e6e6e">Показа...</div>
<div class="abs" style="left:884px;top:554px;width:70px;height:26px;border:1px solid #ccc;border-radius:3px;background:#fff;text-align:center;line-height:25px;font-size:12px;color:#595959">Да</div>
<div class="abs" style="left:884px;top:585px;width:70px;height:26px;border-radius:3px;background:#595959;text-align:center;line-height:26px;font-size:12px;color:#fff;font-weight:bold">Нет</div>
</div>

<div id="frameLeft" class="abs"></div>
</body>
</html>
